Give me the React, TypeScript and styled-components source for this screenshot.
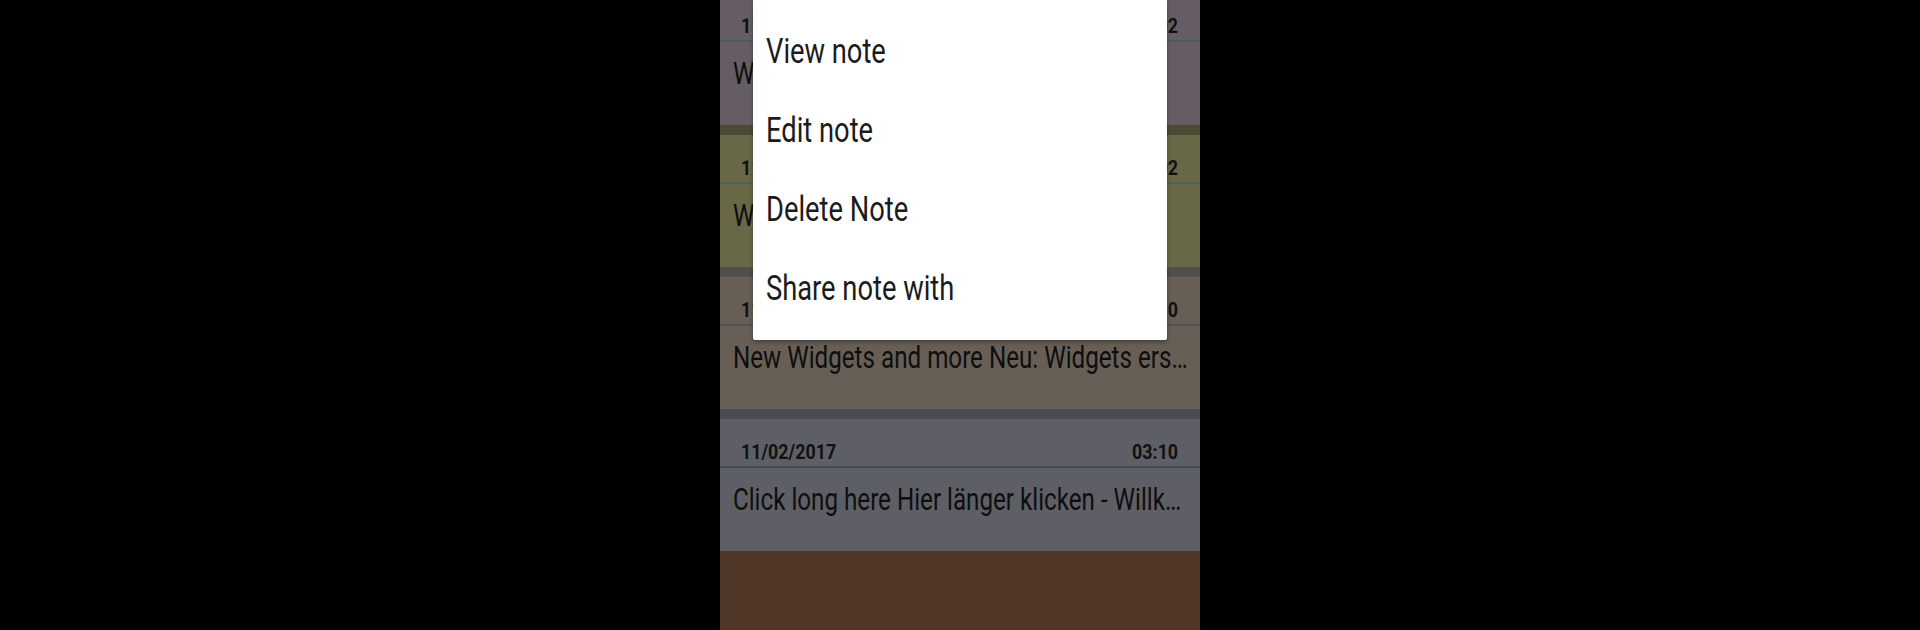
import React from "react";
import styled, { createGlobalStyle } from "styled-components";

const GlobalStyle = createGlobalStyle`
  html, body {
    margin: 0;
    padding: 0;
    background: #000;
  }
  * {
    box-sizing: border-box;
  }
`;

type Note = {
  date: string;
  time: string;
  text: string;
  bg: string;
  strip: string;
  line: string;
};

const notes: Note[] = [
  {
    date: "11/02/2017",
    time: "03:02",
    text: "Widgets Widgets: Hier können Sie...",
    bg: "#665d64",
    strip: "#4f4a50",
    line: "#4c5a5c",
  },
  {
    date: "11/02/2017",
    time: "03:02",
    text: "Widgets Widgets sind verfügbar...",
    bg: "#686746",
    strip: "#4c4a37",
    line: "#49625a",
  },
  {
    date: "11/02/2017",
    time: "03:10",
    text: "New Widgets and more Neu: Widgets ers…",
    bg: "#675f56",
    strip: "#514f4b",
    line: "#4a5753",
  },
  {
    date: "11/02/2017",
    time: "03:10",
    text: "Click long here Hier länger klicken - Willk…",
    bg: "#5e5f66",
    strip: "#4a4b51",
    line: "#424b4c",
  },
];

const menuItems = ["View note", "Edit note", "Delete Note", "Share note with"];

const Screen = styled.div`
  position: relative;
  width: 480px;
  height: 630px;
  margin: 0 auto;
  overflow: hidden;
  background: #4f3626;
  font-family: Roboto, "Noto Sans", "Liberation Sans", sans-serif;
`;

const NoteList = styled.div`
  display: flex;
  flex-direction: column;
  margin-top: -17px;
`;

const NoteCard = styled.div<{ $bg: string; $strip: string }>`
  height: 142px;
  display: flex;
  flex-direction: column;
  background: ${(p) => p.$bg};
  border-top: 10px solid ${(p) => p.$strip};
`;

const CardHeader = styled.div`
  height: 47px;
  display: flex;
  align-items: flex-end;
  justify-content: space-between;
  padding: 0 22px 3px 21px;
  font-size: 21px;
  line-height: 21px;
  font-weight: 700;
  color: #111;
`;

const Separator = styled.div<{ $color: string }>`
  height: 2px;
  background: ${(p) => p.$color};
`;

const CardBody = styled.div`
  padding: 16px 13px 0;
  font-size: 31px;
  line-height: 31px;
  color: #0e0e0e;
  white-space: nowrap;
`;

const Narrow = styled.span<{ $scale: number; $from?: "left" | "right" }>`
  display: inline-block;
  white-space: nowrap;
  transform: scaleX(${(p) => p.$scale});
  transform-origin: ${(p) => p.$from ?? "left"} center;
`;

const PopupMenu = styled.div`
  position: absolute;
  top: 0;
  left: 33px;
  width: 414px;
  padding: 12px 0;
  background: #fff;
  border-radius: 0 0 2px 2px;
  box-shadow: 0 2px 4px rgba(0, 0, 0, 0.35);
`;

const MenuItem = styled.div`
  height: 79px;
  padding-left: 13px;
  font-size: 35px;
  line-height: 79px;
  color: #1b1b1b;
  white-space: nowrap;
`;

export default function App() {
  return (
    <>
      <GlobalStyle />
      <Screen>
        <NoteList>
          {notes.map((note, i) => (
            <NoteCard key={i} $bg={note.bg} $strip={note.strip}>
              <CardHeader>
                <Narrow $scale={0.85}>{note.date}</Narrow>
                <Narrow $scale={0.85} $from="right">
                  {note.time}
                </Narrow>
              </CardHeader>
              <Separator $color={note.line} />
              <CardBody>
                <Narrow $scale={0.78}>{note.text}</Narrow>
              </CardBody>
            </NoteCard>
          ))}
        </NoteList>
        <PopupMenu>
          {menuItems.map((item) => (
            <MenuItem key={item}>
              <Narrow $scale={0.78}>{item}</Narrow>
            </MenuItem>
          ))}
        </PopupMenu>
      </Screen>
    </>
  );
}
